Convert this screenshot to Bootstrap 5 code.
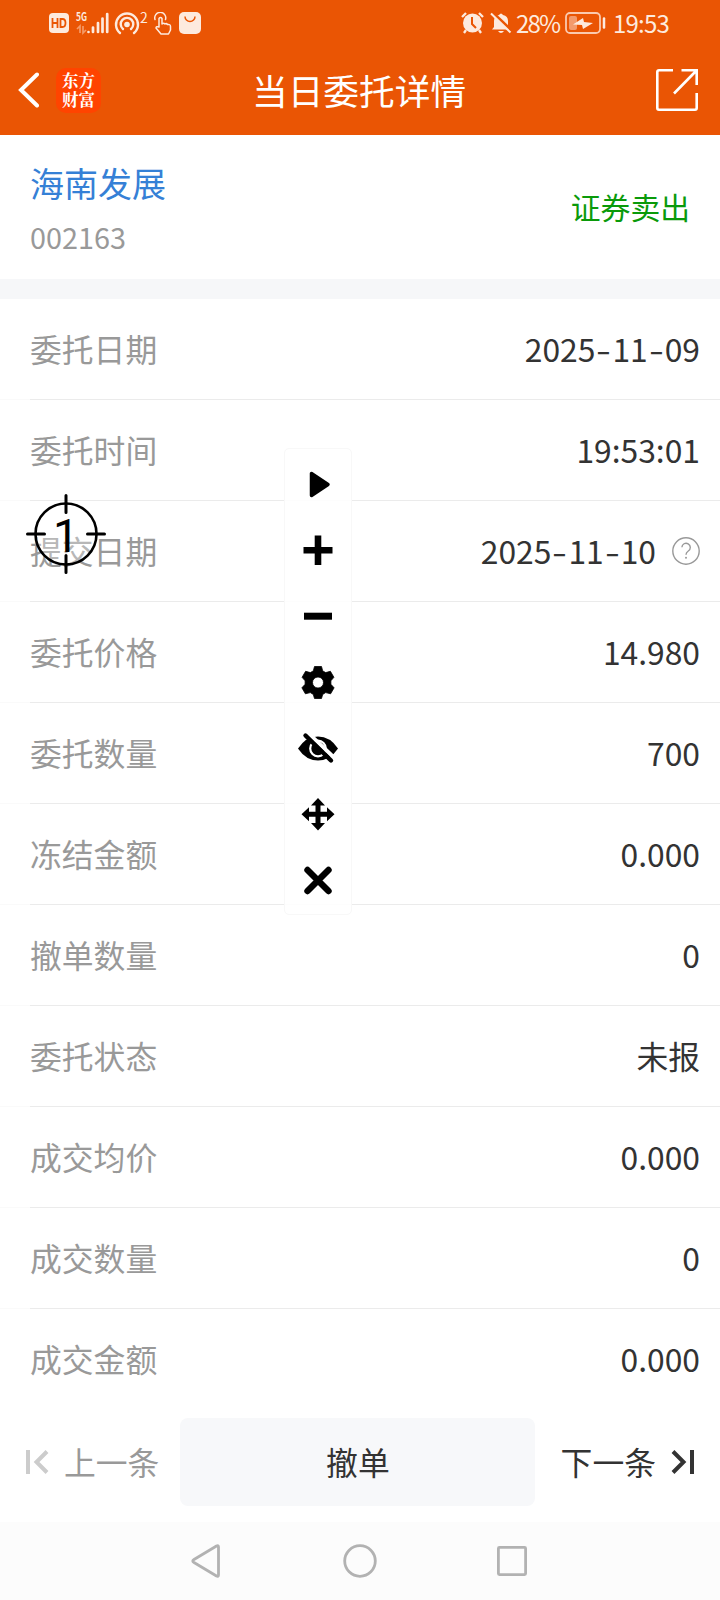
<!DOCTYPE html>
<html lang="zh-CN">
<head>
<meta charset="utf-8">
<meta name="viewport" content="width=device-width, initial-scale=1">
<title>当日委托详情</title>
<link rel="stylesheet" href="https://cdn.jsdelivr.net/npm/bootstrap@5.3.0/dist/css/bootstrap.min.css">
<style>
body{font-family:"Noto Sans CJK SC",sans-serif;font-size:31.8px;line-height:1;color:#333;background:#fff}
svg{display:block;flex:none}
.screen{width:720px;height:1600px}
.top-area{height:135px;background:#ea5504;color:#fff}
.status-bar{height:46px;padding:0 48px 0 49px;color:#fdeade;font-size:24px}
.battery-pct{width:47px;margin-left:4px;letter-spacing:-1.8px}
.clock{width:59px;margin-left:6px;letter-spacing:-.8px}
.title-bar{height:89px;padding:0 22px 1px 17px}
.title-bar h1{font-size:35.700px;line-height:1;font-weight:400;margin:0 0 0 151px}
.app-logo{width:45px;height:45px;margin-left:17px;border-radius:10px;background:#ff4400;font:700 16.5px/19px "Noto Serif CJK SC","Noto Sans CJK SC",serif}
.app-logo span{display:block;height:19px}
.stock{height:144px;padding:0 31px 0 30px}
.stock-name{font-size:34px;color:#3580d6;margin-top:3px}
.stock-code{font-size:28.800px;color:#999;margin-top:23px}
.side{font-size:29.800px;color:#0a9a0a;margin-right:-1px}
.strip{height:20px;background:#f6f7f9}
.detail{height:101px;padding:0 20px 1px 30px;background:linear-gradient(90deg,#fafafa 30px,#ebebeb 30px) bottom/100% 1px no-repeat}
.detail:last-child{background:none}
.detail dt{font-weight:400;color:#999}
.dash{display:inline-block;width:17px;text-align:center;transform:scaleX(1.35)}
.pager{height:112px;padding:8px 25px 0 25px}
.pager-side{height:88px}
.cancel-btn{width:355px;height:88px;border-radius:8px;background:#f7f8fa;color:#333;font-size:31.800px;line-height:1;border:0;padding:0;margin-left:21px}
.nav-keys{height:78px;background:#fcfcfc}
.tool-panel{left:284px;top:448px;width:68px;height:467px;border-radius:5px;background:rgba(255,255,255,.88);border:1px solid #f8f8f8}
.tool-panel svg{height:66px;width:66px}
.aim{left:26px;top:494px}
</style>
</head>
<body>
<main class="screen position-relative overflow-hidden">
 <header class="top-area">
  <div class="status-bar d-flex align-items-center">
   <svg width="20" height="20" viewBox="0 0 20 20"><rect width="20" height="20" rx="4" fill="#fdeade"/><path d="M3.500 5v10M8.500 5v10M3.500 10h5M11.500 6v8h2q3 0 3-4t-3-4z" fill="none" stroke="#ea5504" stroke-width="1.800"/></svg>
   <svg class="overflow-visible" width="34" height="22" viewBox="0 0 34 22" style="margin-left:7px"><text x="0" y="9" font-size="11" font-weight="700" fill="#fdeade" textLength="11" lengthAdjust="spacingAndGlyphs">5G</text><path d="M4 21v-7l-3 3M7 14v7l3-3" fill="none" stroke="#f59a68" stroke-width="1.700"/><path d="M12.500 20v0M17 15.500v4.500M22 11v9M26.500 6.500v13.500M31.200 2v18" stroke="#fdeade" stroke-width="2.700" stroke-linecap="round"/></svg>
   <svg class="overflow-visible" width="33" height="23" viewBox="0 0 33 23" style="margin-left:5px"><g fill="none" stroke="#fdeade" stroke-width="2.400" stroke-linecap="round"><path d="M5 21A11 11 0 1 1 19 21M8 17A6.300 6.300 0 1 1 16 17"/></g><circle cx="12" cy="12.500" r="2.800" fill="#fdeade"/><text x="25" y="10.500" font-size="14" fill="#fdeade">2</text></svg>
   <svg width="20" height="23" viewBox="0 0 20 23" style="margin-left:5px"><g fill="none" stroke="#fdeade" stroke-width="1.500" stroke-linejoin="round" stroke-linecap="round"><path d="M6 15V6.500q1.500-2 3 0V12q1.500-1.500 3 0 1.500-1 2.500.5 3-.5 3 2V18l-2 4H8l-5-6q0-2 3-1M2 7.500a5.500 5.500 0 1 1 10.500 0"/></g></svg>
   <svg width="22" height="22" viewBox="0 0 22 22" style="margin-left:6px"><rect width="22" height="22" rx="5" fill="#fdeade"/><path d="M6 4.500a5 5 0 0 0 10 0" fill="none" stroke="#ea5504" stroke-width="1.500"/></svg>
   <svg class="ms-auto" width="23" height="22" viewBox="0 0 23 22"><circle cx="11.500" cy="11" r="9.500" fill="#fdeade"/><path d="M1 5l4-4M22 5l-4-4M5 18l-2 3M18 18l2 3" stroke="#fdeade" stroke-width="2.300"/><path d="M11 5v7l4 4" fill="none" stroke="#ea5504" stroke-width="2"/></svg>
   <svg width="22" height="22" viewBox="0 0 22 22" style="margin-left:6px"><path d="M2 17.500 4 15V9q0-5 5-6 2-3 4 0 5 1 5 6v6l2 2.500zM8 19h6q-3 4-6 0" fill="#fdeade"/><path d="M2 0 23 20" stroke="#ea5504" stroke-width="3"/><path d="M1 1.500 20.500 20.500" stroke="#fdeade" stroke-width="2"/></svg>
   <span class="battery-pct">28%</span>
   <svg width="42" height="23" viewBox="0 0 42 23" style="margin-left:2px"><rect x="1" y="1" width="34" height="20" rx="4" fill="none" stroke="#fbc9ae" stroke-width="1.800"/><rect x="4" y="4" width="8" height="14" rx="2" fill="#f39a6c"/><path d="M8 12.500 18 6l1 4 9 1-10 6-1-4z" fill="#fdeade"/><path d="M39 6.500v9" stroke="#fdeade" stroke-width="2.500" stroke-linecap="round"/></svg>
   <span class="clock">19:53</span>
  </div>
  <div class="title-bar d-flex align-items-center">
   <svg width="22" height="38" viewBox="0 0 22 38"><path d="M20 3.500 4 19 20 34.500" fill="none" stroke="#fff" stroke-width="4" stroke-linecap="round"/></svg>
   <div class="app-logo d-flex flex-column align-items-center justify-content-center"><span>东方</span><span>财富</span></div>
   <h1>当日委托详情</h1>
   <svg class="ms-auto" width="42" height="42" viewBox="0 0 42 42"><path d="M17 1.300H3Q1.300 1.300 1.300 3V39Q1.300 40.700 3 40.700H39Q40.700 40.700 40.700 39V24M25.500 1.300H40.700V16M40 2 18 24.500" fill="none" stroke="#fff" stroke-width="2.600"/></svg>
  </div>
 </header>
 <section class="stock d-flex align-items-center justify-content-between">
  <div><div class="stock-name">海南发展</div><div class="stock-code">002163</div></div>
  <div class="side">证券卖出</div>
 </section>
 <div class="strip"></div>
 <dl class="m-0">
  <div class="detail d-flex align-items-center justify-content-between"><dt>委托日期</dt><dd class="m-0">2025<span class="dash">-</span>11<span class="dash">-</span>09</dd></div>
  <div class="detail d-flex align-items-center justify-content-between"><dt>委托时间</dt><dd class="m-0">19:53:01</dd></div>
  <div class="detail d-flex align-items-center justify-content-between"><dt>提交日期</dt><dd class="m-0 d-flex align-items-center"><span>2025<span class="dash">-</span>11<span class="dash">-</span>10</span>
   <svg width="28" height="28" viewBox="0 0 28 28" style="margin-left:16px"><circle cx="14" cy="14" r="13.200" fill="none" stroke="#999" stroke-width="1.400"/><path d="M9.900 10.300a4.200 4.200 0 1 1 6.400 3.700Q14 15.500 14 17.800" fill="none" stroke="#999" stroke-width="1.400"/><circle cx="14" cy="20.700" r="1" fill="#999"/></svg></dd></div>
  <div class="detail d-flex align-items-center justify-content-between"><dt>委托价格</dt><dd class="m-0">14.980</dd></div>
  <div class="detail d-flex align-items-center justify-content-between"><dt>委托数量</dt><dd class="m-0">700</dd></div>
  <div class="detail d-flex align-items-center justify-content-between"><dt>冻结金额</dt><dd class="m-0">0.000</dd></div>
  <div class="detail d-flex align-items-center justify-content-between"><dt>撤单数量</dt><dd class="m-0">0</dd></div>
  <div class="detail d-flex align-items-center justify-content-between"><dt>委托状态</dt><dd class="m-0">未报</dd></div>
  <div class="detail d-flex align-items-center justify-content-between"><dt>成交均价</dt><dd class="m-0">0.000</dd></div>
  <div class="detail d-flex align-items-center justify-content-between"><dt>成交数量</dt><dd class="m-0">0</dd></div>
  <div class="detail d-flex align-items-center justify-content-between"><dt>成交金额</dt><dd class="m-0">0.000</dd></div>
 </dl>
 <footer>
  <div class="pager d-flex align-items-start">
   <div class="pager-side d-flex align-items-center" style="color:#999"><svg width="24" height="24" viewBox="0 0 24 24" style="margin-right:15px"><path d="M3 0v24M22 1.500 11.500 12 22 22.500" fill="none" stroke="#ccc" stroke-width="4"/></svg>上一条</div>
   <button class="btn cancel-btn" type="button">撤单</button>
   <div class="pager-side ms-auto d-flex align-items-center">下一条<svg width="24" height="24" viewBox="0 0 24 24" style="margin-left:15px"><path d="M21 0v24M2 1.500 12.500 12 2 22.500" fill="none" stroke="#333" stroke-width="4"/></svg></div>
  </div>
  <nav class="nav-keys">
   <svg width="720" height="78" viewBox="0 0 720 78" fill="none" stroke="#b2b2b2" stroke-width="2.800" stroke-linejoin="round"><path d="M218.500 25Q218.500 23 216.500 24L194 37.500Q191.500 39 194 40.500L216.500 54Q218.500 55 218.500 53Z"/><circle cx="360" cy="39" r="15.300"/><rect x="498.400" y="25.400" width="27.200" height="27.200" rx="1"/></svg>
  </nav>
 </footer>

 <div class="tool-panel position-absolute d-flex flex-column">
  <svg viewBox="0 0 66 66"><path d="M26.500 24.500v22L43 35.500z" stroke="#000" stroke-width="3.500" stroke-linejoin="round"/></svg>
  <svg viewBox="0 0 66 66"><path d="M33 20.500v29.500M18.500 35.200h29" stroke="#000" stroke-width="6.600"/></svg>
  <svg viewBox="0 0 66 66"><path d="M19 35.200h28" stroke="#000" stroke-width="7"/></svg>
  <svg viewBox="0 0 66 66"><path transform="translate(0 1)" fill-rule="evenodd" d="M29.500 18.500h7l1.200 4.400 3 1.700 4.700-1.300 3.500 6-3 3.500v3.500l3.200 3.500-3.500 6-4.900-1.200-3 1.800-1.200 4.100h-7l-1.200-4.100-3-1.800-4.900 1.200-3.500-6 3.200-3.500v-3.500l-3-3.500 3.500-6 4.700 1.300 3-1.700zM33 29a5.500 5.500 0 1 0 0 11 5.500 5.500 0 1 0 0-11z" stroke="#000" stroke-width=".8" stroke-linejoin="round"/></svg>
  <svg viewBox="0 0 66 66"><g transform="translate(0 1)"><path d="M13 34.500Q21 22.500 33 22.500T53 34.500Q45 46.500 33 46.500T13 34.500z"/><circle cx="33" cy="34.500" r="7.800" fill="none" stroke="#fff" stroke-width="2.200"/><path d="M23 19 51 45.500" stroke="#fff" stroke-width="4"/><path d="M20.500 21.500 46 46.500" stroke="#000" stroke-width="4.400" stroke-linecap="round"/></g></svg>
  <svg viewBox="0 0 66 66"><path d="M33 23v25M20 35.200h26" stroke="#000" stroke-width="5"/><path d="M33 19l7 7.500H26zM33 51.500l7-7.500H26zM16.500 35.200l7.500-7v14zM49.500 35.200l-7.500-7v14z"/></svg>
  <svg viewBox="0 0 66 66"><path d="M22.500 25 43.500 46M43.500 25 22.500 46" stroke="#000" stroke-width="6.400" stroke-linecap="round"/></svg>
 </div>
 <svg class="aim position-absolute" width="80" height="80" viewBox="0 0 80 80"><circle cx="40" cy="40" r="30.500" fill="#fff" fill-opacity=".3" stroke="#000" stroke-width="2.600"/><path d="M40 1.500V18.500M40 61.500V78.500M1.500 40H18.500M61.500 40H78.500" stroke="#000" stroke-width="3" stroke-linecap="round"/><text x="27" y="58" style="font-family:Roboto,sans-serif" font-size="46" fill="#000">1</text></svg>
</main>
<script src="https://cdn.jsdelivr.net/npm/bootstrap@5.3.0/dist/js/bootstrap.bundle.min.js"></script>
</body>
</html>
